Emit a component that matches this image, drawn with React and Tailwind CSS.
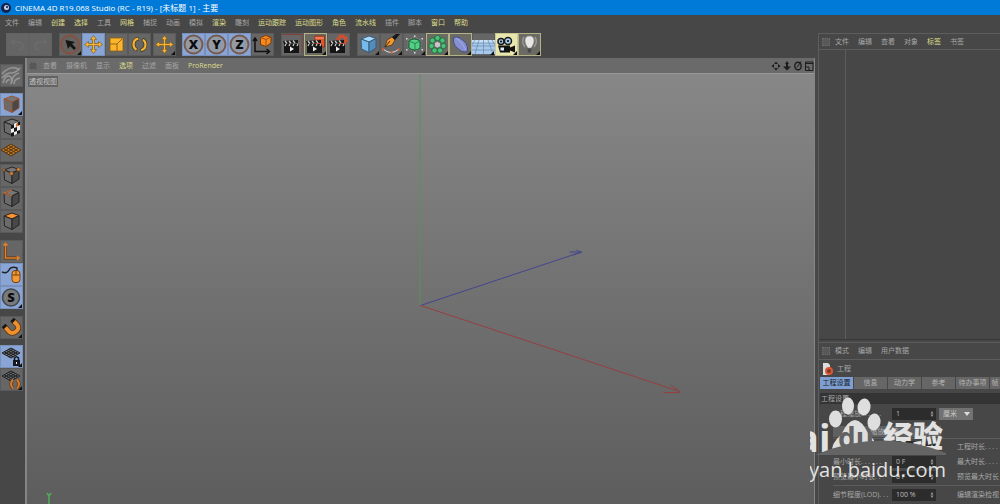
import { useState } from 'react';

const mainMenu = [
  { label: '文件' },
  { label: '编辑' },
  { label: '创建', hot: true },
  { label: '选择', hot: true },
  { label: '工具' },
  { label: '网格', hot: true },
  { label: '捕捉' },
  { label: '动画' },
  { label: '模拟' },
  { label: '渲染', hot: true },
  { label: '雕刻' },
  { label: '运动跟踪', hot: true },
  { label: '运动图形', hot: true },
  { label: '角色', hot: true },
  { label: '流水线', hot: true },
  { label: '插件' },
  { label: '脚本' },
  { label: '窗口', hot: true },
  { label: '帮助', hot: true },
];

const viewMenu = [
  { label: '查看' },
  { label: '摄像机' },
  { label: '显示' },
  { label: '选项', hot: true },
  { label: '过滤' },
  { label: '面板' },
  { label: 'ProRender', hot: true },
];

const objectMenu = [
  { label: '文件' },
  { label: '编辑' },
  { label: '查看' },
  { label: '对象' },
  { label: '标签', hot: true },
  { label: '书签' },
];

const attributeMenu = [{ label: '模式' }, { label: '编辑' }, { label: '用户数据' }];

const tabs = ['工程设置', '信息', '动力学', '参考', '待办事项', '帧'];

const move = 'M11.500 2.500l3 4h-2v4h4v-2l4 3-4 3v-2h-4v4h2l-3 4-3-4h2v-4h-4v2l-4-3 4-3v2h4v-4h-2z';

function Cube({ top = '#777', left = '#6b6b6b', right = '#484848', stroke = '#252525' }) {
  return (
    <g stroke={stroke} strokeWidth="1" strokeLinejoin="round">
      <path d="M4 6l8-3 7 2.500-7 3.500z" fill={top} />
      <path d="M4 6l8 3v10.500L4.500 16z" fill={left} />
      <path d="M12 9l7-3.500V15l-7 4.500z" fill={right} />
    </g>
  );
}

function Axis({ letter }) {
  return (
    <>
      <circle cx="11.5" cy="11.5" r="9" fill="#929aa5" stroke="#775b50" strokeWidth="2" />
      <text x="11.5" y="16" textAnchor="middle" fontSize="13" fontWeight="800" fill="#0c0c10">{letter}</text>
    </>
  );
}

function Clapper() {
  return (
    <g>
      <path d="M3 11h15v9H3z" fill="#151515" />
      <path d="M2 8l15-1v3L3 11z" fill="#171717" />
      <path d="M4 8l2 2.500M8 8l2 2.300M12 7.500l2 2.500M5 11l-1 2M9 11l-1 2M13 11l-1 2M17 11l-1 2" stroke="#c9c9c9" strokeWidth="1.300" />
      <path d="M9 13.500v5l4-2.500z" fill="#eee" />
    </g>
  );
}

function Mesh() {
  return (
    <g stroke="#202020" strokeWidth="1" fill="none">
      <path d="M2 8l9-5 9 5-9 5z" fill="#6d737c" />
      <path d="M4.200 9.200l9-5M6.500 10.500l9-5M8.700 11.800l9-5M4.200 6.800l9 5M6.500 5.500l9 5M8.700 4.200l9 5" />
    </g>
  );
}

const icons = {
  undo: <path d="M6 9h7q4 0 4 4t-4 4M9 6l-4 3 4 3" stroke="#6f6f6f" fill="none" />,
  redo: <path d="M17 9h-7q-4 0-4 4t4 4M14 6l4 3-4 3" stroke="#6f6f6f" fill="none" />,
  select: (
    <>
      <circle cx="11" cy="11.500" r="9" fill="#666260" stroke="#84503f" strokeWidth="2" />
      <path d="M6.500 7l2.500 9 2-3 4 4 2-2-4-4 3-2z" fill="#141414" />
    </>
  ),
  move: <path d={move} fill="#f9b233" stroke="#6c5018" strokeWidth=".6" />,
  scale: (
    <>
      <path d="M5 5h13v13H5z" fill="#fbb52d" stroke="#8a5d13" strokeWidth=".8" />
      <path d="M5 11h7v7M12 11l5-5" stroke="#99630f" fill="none" />
    </>
  ),
  rotate: (
    <>
      <circle cx="11.500" cy="11.500" r="6" fill="none" stroke="#3e3523" strokeWidth="3.600" strokeDasharray="15 3.850" strokeDashoffset="7" />
      <circle cx="11.500" cy="11.500" r="6" fill="none" stroke="#f7b42f" strokeWidth="2.200" strokeDasharray="14 4.850" strokeDashoffset="6.500" />
    </>
  ),
  x: <Axis letter="X" />,
  y: <Axis letter="Y" />,
  z: <Axis letter="Z" />,
  world: (
    <>
      <path d="M4 6v12.500h14M2 8l2-3 2 3M15.500 16l3 2.500-3 2.500" fill="none" stroke="#111" strokeWidth="1.500" />
      <path d="M9.500 4.500l5-2 5.500 1.500v6l-5 3.500-5.500-2z" fill="#f48a21" stroke="#793908" />
      <path d="M9.500 4.500l5.500 2 5-2.500M15 6.500v7" fill="none" stroke="#a54e0b" />
    </>
  ),
  render: (
    <>
      <path d="M1 1.500h20v19" fill="none" stroke="#844034" />
      <Clapper />
    </>
  ),
  renderView: (
    <>
      <path d="M11 3h9.500v11H11z" fill="#e2562e" stroke="#8e321b" />
      <path d="M11 5h9" stroke="#f4a084" />
      <Clapper />
    </>
  ),
  renderSettings: (
    <>
      <circle cx="15" cy="7" r="3.500" fill="none" stroke="#d64e2b" strokeWidth="2.500" />
      <circle cx="15" cy="7" r="5.300" fill="none" stroke="#d64e2b" strokeWidth="1.600" strokeDasharray="2.100 2.060" />
      <Clapper />
    </>
  ),
  cube: <Cube top="#a9d9f8" left="#78b9e9" right="#528dbc" stroke="#365d7c" />,
  pen: (
    <>
      <path d="M3 16q8 7 16 0" stroke="#ddd" fill="none" />
      <path d="M2 15.500h2v2H2zM18 15.500h2v2h-2zM10.500 18.500h2v2h-2z" fill="#d85b32" />
      <path d="M5 14l2-7 5-3 3 3-3 5z" fill="#f4972d" stroke="#402915" strokeWidth=".7" />
      <path d="M12 4l4-3h4l-5 6z" fill="#171717" />
      <path d="M5 14l5-6" stroke="#372310" />
    </>
  ),
  subdivision: (
    <>
      <path d="M5 7l6-3 7 3v8l-7 4-6-4z" fill="none" stroke="#8fa198" strokeDasharray="1.500 1.500" strokeWidth=".7" />
      <path d="M6 8q5-4 11 0v7q-5 4-11 0z" fill="#54cf85" stroke="#175f37" />
      <path d="M6 8l6 2.500L17 8M12 10.500V17" stroke="#238750" fill="none" />
      <path d="M3 5h1.500v1.500H3zM18.500 5H20v1.500h-1.500zM3 16h1.500v1.500H3zM18.500 16H20v1.500h-1.500zM11 2.500h1.500V4H11zM11 19h1.500v1.500H11z" fill="#d5dfda" />
    </>
  ),
  array: (
    <g fill="#4bbf76" stroke="#1b6339" strokeWidth=".8">
      <circle cx="11.500" cy="5" r="2.700" />
      <circle cx="16.500" cy="7.500" r="2.700" />
      <circle cx="17.500" cy="13" r="2.700" />
      <circle cx="14" cy="17.500" r="2.700" />
      <circle cx="8.500" cy="17.500" r="2.700" />
      <circle cx="5.500" cy="13" r="2.700" />
      <circle cx="6.500" cy="7.500" r="2.700" />
      <path d="M8.500 9.500l3-1 3 1.500v3.500l-3 1.500-3-1.500z" fill="#c6c6c6" stroke="#666" />
    </g>
  ),
  deformer: (
    <>
      <path d="M5 4q5-1 10 4t3 11q-5 1-10-4T5 4z" fill="#8690d0" stroke="#464d82" />
      <path d="M7 5q7 5 9.500 12" stroke="#9aa3dd" fill="none" strokeWidth="1.500" />
    </>
  ),
  floor: (
    <>
      <path d="M0 7h23v14H0z" fill="#a7c9ec" />
      <path d="M0 7h23v3H0z" fill="#c8dff4" />
      <path d="M0 10h23M0 13h23M0 17h23M7 7L3 21M11.500 7v14M16 7l5 14M3 7l-3 5M20 7l3 5" stroke="#6587ad" strokeWidth=".7" />
    </>
  ),
  camera: (
    <>
      <circle cx="6" cy="8.500" r="3" fill="#a8cce5" stroke="#17191c" strokeWidth="1.500" />
      <circle cx="13" cy="8" r="3.500" fill="#a8cce5" stroke="#17191c" strokeWidth="1.500" />
      <circle cx="6" cy="8.500" r="1" /><circle cx="13" cy="8" r="1" />
      <path d="M3 12.500h12v2l5-2v7l-5-2v2H5z" fill="#111" />
      <path d="M5.500 14.500h3.500v3H5.500z" fill="#d8edff" />
    </>
  ),
  light: (
    <>
      <path d="M6 4q-3 5 1 10M17 4q3 5-1 10" fill="none" stroke="#989898" strokeWidth="1.500" />
      <path d="M11.500 3q4.500 0 4.500 5 0 3-3 7h-3q-3-4-3-7 0-5 4.500-5z" fill="#e7e7e7" stroke="#999" strokeWidth=".6" />
      <path d="M9.500 15.500h4l-.500 4h-3z" fill="#484848" />
    </>
  ),
  texture: (
    <>
      <path d="M1 2h20v19H1z" fill="#686868" />
      <path d="M2 10q8-9 16-5M2 14q4-5 9-5t9-5M3 19q2-8 6-7t2 8M12 18q0-7 7-9M14 20q0-5 6-6M6 19q1-4 4-3" stroke="#969696" strokeWidth="1.600" fill="none" />
    </>
  ),
  model: <Cube stroke="#9b5632" />,
  checker: (
    <>
      <Cube />
      <path d="M11 9l9-4v11l-9 5z" fill="#eee" />
      <path d="M11 9l3-1v4l-3 1zM17 7l3-2v4l-3 1zM14 12l3-1v4l-3 1zM11 17l3-1v4l-3 1zM17 15l3-1v3l-3 1z" fill="#171717" />
      <path d="M16 8l2-1v3l-2 1z" fill="#d8732c" />
    </>
  ),
  workplane: (
    <g stroke="#523517" strokeWidth="1" fill="none">
      <path d="M1 11l10-6 10 6-10 6z" fill="#c47721" />
      <path d="M3.500 12.500l10-6M6 14l10-6M8.500 15.500l10-6M3.500 9.500l10 6M6 8l10 6M8.500 6.500l10 6" />
    </g>
  ),
  points: (
    <>
      <Cube />
      <path d="M10 8h3v3h-3zM17 4h3v3h-3zM3 5h2v2H3z" fill="#e98b35" stroke="#6b3913" strokeWidth=".6" />
    </>
  ),
  edges: (
    <>
      <Cube />
      <path d="M12 3L4 6l8 3" stroke="#c86c30" strokeWidth="1.300" fill="none" />
    </>
  ),
  polygons: <Cube top="#ff9230" />,
  axis: (
    <>
      <path d="M5.500 3.500V18H19" fill="none" stroke="#593211" strokeWidth="3" />
      <path d="M5.500 3.500V18H19M3.500 5.500l2-2 2 2M17 16l2 2-2 2" fill="none" stroke="#dc8231" strokeWidth="1.600" />
    </>
  ),
  mouse: (
    <>
      <path d="M2 9q5 2 7-2t8-2v3" fill="none" stroke="#202226" strokeWidth="1.400" />
      <rect x="12" y="7.500" width="8" height="12" rx="3" fill="#f49a34" stroke="#714010" />
      <path d="M12 12h8M16 7.500V12" stroke="#71410f" />
    </>
  ),
  snap: (
    <>
      <circle cx="11" cy="11.500" r="8.500" fill="#777b80" stroke="#44474b" strokeWidth="1.600" />
      <text x="11" y="16" textAnchor="middle" fontSize="13" fontWeight="800" fill="#0d0d0d">S</text>
    </>
  ),
  magnet: (
    <>
      <path d="M5 11l4 4.500q3 3 7 0t1-7L13.500 5" fill="none" stroke="#5a3512" strokeWidth="5.500" />
      <path d="M5 11l4 4.500q3 3 7 0t1-7L13.500 5" fill="none" stroke="#ef902d" strokeWidth="4" />
      <path d="M3.500 9.500L5.500 11.500M12 3.500l2 2" stroke="#171717" strokeWidth="5" />
    </>
  ),
  lockMesh: (
    <>
      <Mesh />
      <path d="M14.500 15v-2q2-2.500 4 0v2" fill="none" stroke="#15191f" strokeWidth="1.600" />
      <path d="M13 15h7v6h-7z" fill="#15191f" />
      <path d="M16 17h1v2h-1z" fill="#eee" />
    </>
  ),
  rotateMesh: (
    <>
      <Mesh />
      <path d="M13 11.500q-4 4.500 0 9M17 11.500q4 4.500 0 9" fill="none" stroke="#593211" strokeWidth="3.200" />
      <path d="M13 11.500q-4 4.500 0 9M17 11.500q4 4.500 0 9" fill="none" stroke="#d97b2a" strokeWidth="2" />
    </>
  ),
};

const toolbar = [
  { gap: 'mr-[7px]', items: [{ icon: 'undo', label: '撤销', off: true }, { icon: 'redo', label: '重做', off: true }] },
  {
    gap: 'mr-[2px]',
    items: [
      { icon: 'select', label: '实时选择', corner: true },
      { icon: 'move', label: '移动', on: true },
      { icon: 'scale', label: '缩放' },
      { icon: 'rotate', label: '旋转' },
    ],
  },
  { gap: 'mr-[6px]', items: [{ icon: 'move', label: '最近工具', corner: true }] },
  {
    gap: 'mr-[7px]',
    items: [
      { icon: 'x', label: 'X 轴', on: true },
      { icon: 'y', label: 'Y 轴', on: true },
      { icon: 'z', label: 'Z 轴', on: true },
      { icon: 'world', label: '坐标系统' },
    ],
  },
  {
    gap: 'mr-[7px]',
    items: [
      { icon: 'render', label: '渲染活动视图' },
      { icon: 'renderView', label: '渲染到图片查看器', framed: true, corner: true },
      { icon: 'renderSettings', label: '编辑渲染设置' },
    ],
  },
  {
    gap: '',
    items: [
      { icon: 'cube', label: '立方体', corner: true },
      { icon: 'pen', label: '画笔', corner: true },
      { icon: 'subdivision', label: '细分曲面', corner: true },
      { icon: 'array', label: '阵列', framed: true, corner: true },
      { icon: 'deformer', label: '扭曲', framed: true, corner: true },
      { icon: 'floor', label: '地面', corner: true },
      { icon: 'camera', label: '摄像机', lit: true, corner: true },
      { icon: 'light', label: '灯光', framed: true, corner: true },
    ],
  },
];

const modes = [
  { gap: 'mb-[6px]', items: [{ icon: 'texture', label: '转为可编辑对象' }] },
  {
    gap: 'mb-[2px]',
    items: [
      { icon: 'model', label: '模型', on: true, corner: true },
      { icon: 'checker', label: '纹理' },
      { icon: 'workplane', label: '工作平面' },
    ],
  },
  {
    gap: 'mb-[7px]',
    items: [
      { icon: 'points', label: '点' },
      { icon: 'edges', label: '边' },
      { icon: 'polygons', label: '多边形' },
    ],
  },
  {
    gap: 'mb-[7px]',
    items: [
      { icon: 'axis', label: '启用轴心' },
      { icon: 'mouse', label: '微调', on: true },
      { icon: 'snap', label: '视窗独显', on: true, corner: true },
    ],
  },
  { gap: 'mb-[6px]', items: [{ icon: 'magnet', label: '启用捕捉', corner: true }] },
  {
    gap: '',
    items: [
      { icon: 'lockMesh', label: '锁定工作平面', on: true, corner: true },
      { icon: 'rotateMesh', label: '平面工作平面', corner: true },
    ],
  },
];

function ToolButton({ item }) {
  let look = 'bg-[#666] ring-[#5a5a5a]';
  if (item.off) look = 'bg-[#656565] ring-[#626262]';
  if (item.on) look = 'bg-[#88a5d6] ring-[#7890ba]';
  if (item.framed) look = 'bg-[#6b6b64] ring-[#b4b287]';
  if (item.lit) look = 'bg-[#e9e7ae] ring-[#c9c795]';
  return (
    <button aria-label={item.label} className={`block w-[23px] h-[23px] ring-1 ring-inset ${look}`}>
      <svg viewBox="0 0 23 23" className="w-full h-full">
        {icons[item.icon]}
        {item.corner && <path d="M22 18v4h-4z" fill="#111" />}
      </svg>
    </button>
  );
}

function Menu({ items }) {
  return (
    <nav className="flex items-center gap-[9px] whitespace-nowrap">
      {items.map((item) => (
        <button key={item.label} className={item.hot ? 'text-[#dddc8c]' : 'text-[#a6a6a6]'}>
          {item.label}
        </button>
      ))}
    </nav>
  );
}

function Grip() {
  return <span className="w-[8px] h-[8px] border border-dotted border-[#6c6c6c] bg-[#585858] shrink-0" />;
}

function Field({ id, label, value }) {
  return (
    <>
      <label htmlFor={id} className="w-[59px] shrink-0 overflow-hidden">{label}</label>
      <span className="flex items-center w-[44px] h-[12px] bg-[#2c2c2c] shrink-0">
        <input id={id} defaultValue={value} className="w-[38px] pl-1 bg-transparent text-[#bdbdbd] outline-none" />
        <svg viewBox="0 0 4 8" className="w-1 h-2">
          <path d="M0.500 3.500l1.500-2.500 1.500 2.500zM0.500 4.500l1.500 2.500 1.500-2.500z" fill="#999" />
        </svg>
      </span>
    </>
  );
}

function Viewport() {
  return (
    <main className="flex-1 min-w-0 flex flex-col border-l-2 border-r border-[#858585]">
      <div className="h-[16px] shrink-0 flex items-center bg-[#6a6a6a] border-b border-[#999] pl-[2px]">
        <Grip />
        <div className="ml-[6px] flex-1"><Menu items={viewMenu} /></div>
        <div className="flex gap-px">
          <button aria-label="平移视图">
            <svg viewBox="0 0 10 10" className="w-[10px] h-[10px]">
              <path d="M5 0.500l2 2.500H3zM5 9.500L3 7h4zM0.500 5L3 3v4zM9.500 5L7 3v4z" fill="#1d1d1d" />
            </svg>
          </button>
          <button aria-label="缩放视图">
            <svg viewBox="0 0 10 10" className="w-[10px] h-[10px]">
              <path d="M5 0l2 3H6v2.500h3l-4 4-4-4h3V3H3z" fill="#1d1d1d" />
            </svg>
          </button>
          <button aria-label="旋转视图">
            <svg viewBox="0 0 10 10" className="w-[10px] h-[10px]">
              <ellipse cx="5" cy="5" rx="3.200" ry="3.800" fill="none" stroke="#1d1d1d" strokeWidth="1.400" />
              <path d="M4 6.500l4-6" stroke="#1d1d1d" />
            </svg>
          </button>
          <button aria-label="切换视图">
            <svg viewBox="0 0 10 10" className="w-[10px] h-[10px]">
              <path d="M1.500 1h7.500v8.500H1.500zM1.500 2.500H9M1.500 6H5v3.500" fill="none" stroke="#1d1d1d" />
            </svg>
          </button>
        </div>
      </div>
      <div className="relative flex-1 overflow-hidden bg-linear-to-b from-[#878787] to-[#5d5d5d]">
        <span className="absolute left-px top-[2px] px-px leading-[11px] bg-[#626262] text-[#c4c4c4]">透视视图</span>
        <svg viewBox="0 0 788 430" preserveAspectRatio="xMidYMid slice" className="w-full h-full" fill="none">
          <path d="M393.500 0v231" stroke="#54925a" />
          <path d="M394 231.500L555 178M543 178h12M555 178l-8 3M550 176l5 3" stroke="#45458f" />
          <path d="M394 231.500L653 317.500M637 318.500h16M644 311l9 6.500" stroke="#963f3f" />
          <path d="M20.500 419l2 3 2-3M22.500 422v8" stroke="#54aa5b" strokeWidth="1.500" />
        </svg>
      </div>
    </main>
  );
}

function Watermark() {
  return (
    <div className="absolute right-[54px] bottom-[16px] w-[136px] h-[92px] overflow-hidden pointer-events-none text-[#e2e2e2]">
      <svg viewBox="0 0 136 92" className="absolute inset-0 w-full h-full">
        <g fill="#dedede">
          <ellipse cx="38" cy="10" rx="6" ry="8.500" />
          <ellipse cx="54" cy="11" rx="6.500" ry="8.500" transform="rotate(8 54 11)" />
          <ellipse cx="25.500" cy="23" rx="6.500" ry="8.500" />
          <ellipse cx="64" cy="26" rx="6.500" ry="8.500" transform="rotate(8 64 26)" />
          <path d="M22 57q-1-10 9-18 7-15 14-15t14 15q9 7 8 18z" />
        </g>
      </svg>
      <span className="absolute -left-[14px] top-[23px] text-[38px] leading-[36px] font-bold">ai</span>
      <span className="absolute left-[28px] top-[23px] text-[28px] leading-[36px] font-bold text-[#626262]">du</span>
      <span className="absolute left-[73px] top-[22px] text-[30px] leading-[36px] font-black">经验</span>
      <svg viewBox="0 0 136 92" className="absolute inset-0 w-full h-full">
        <path d="M5 59Q70 31 136 57v2z" fill="#646464" />
      </svg>
      <span className="absolute -left-px top-[60px] text-[20px] leading-[28px]">yan.baidu.com</span>
    </div>
  );
}

function ObjectManager() {
  return (
    <section className="flex-1 flex flex-col border-t border-l border-[#5d5d5d]">
      <div className="h-[16px] shrink-0 flex items-center gap-[5px] pl-[3px] border-b border-[#5d5d5d]">
        <Grip />
        <Menu items={objectMenu} />
      </div>
      <div className="flex-1 flex">
        <div className="w-[27px] border-r border-[#5d5d5d]" />
        <div className="flex-1" />
      </div>
      <div className="h-[3px] bg-[#474747] border-t border-[#383838]" />
    </section>
  );
}

function Attributes() {
  const [tab, setTab] = useState(tabs[0]);

  return (
    <section className="h-[162px] shrink-0 flex flex-col border-l border-[#5d5d5d] text-[#a8a8a8] overflow-hidden">
      <div className="h-[18px] shrink-0 flex items-center gap-[5px] pl-[3px] border-t border-b border-[#5d5d5d]">
        <Grip />
        <Menu items={attributeMenu} />
      </div>
      <div className="h-[17px] shrink-0 flex items-center gap-[4px] pl-[3px]">
        <svg viewBox="0 0 11 12" className="w-[11px] h-[12px]">
          <path d="M1 0h5l2 2v10H1z" fill="#ddd" />
          <circle cx="7" cy="8" r="3" fill="#7c3a2a" stroke="#dc5733" strokeWidth="2" />
        </svg>
        工程
      </div>
      <div className="shrink-0 flex gap-px pl-px whitespace-nowrap">
        {tabs.map((name) => (
          <button
            key={name}
            onClick={() => setTab(name)}
            className={`h-[12px] leading-[12px] basis-[33px] last:basis-[9px] last:grow shrink-0 ${tab === name ? 'bg-[#7f9fd3] text-[#151b26]' : 'bg-[#666] text-[#b4b4b4]'}`}
          >
            {name}
          </button>
        ))}
      </div>
      <h2 className="shrink-0 mt-1 ml-px h-[11px] leading-[11px] pl-px bg-[#343434]">{tab}</h2>
      <div className="pl-[14px] whitespace-nowrap">
        <div className="h-[20px] flex items-center">
          <Field id="scale" label="工程缩放. . . . . ." value="1" />
          <span className="ml-[3px] w-[34px] h-[12px] flex items-center bg-[#727272] text-[#c8c8c8]">
            <select aria-label="单位" className="w-[25px] h-[12px] pl-1 appearance-none bg-transparent">
              <option>厘米</option>
            </select>
            <svg viewBox="0 0 6 4" className="w-[6px] h-1"><path d="M0 0h6L3 4z" fill="#ddd" /></svg>
          </span>
        </div>
        <div className="h-[14px] flex items-center">
          <button className="w-[108px] h-[11px] bg-[#606060] leading-[11px]">缩放工程...</button>
        </div>
        <div className="h-[16px] flex items-center border-t border-[#5d5d5d]">
          <Field id="fps" label="帧率. . . . . . . ." value="30" />
          <span className="ml-[21px]">工程时长. . . .</span>
        </div>
        <div className="h-[15px] flex items-center">
          <Field id="min" label="最小时长. . . . . ." value="0 F" />
          <span className="ml-[21px]">最大时长. . . .</span>
        </div>
        <div className="h-[15px] flex items-center">
          <Field id="preview" label="预览最小时长. ." value="0 F" />
          <span className="ml-[21px]">预览最大时长</span>
        </div>
        <div className="mt-px h-[19px] flex items-center border-t border-[#5d5d5d]">
          <Field id="lod" label="细节程度(LOD). . ." value="100 %" />
          <span className="ml-[21px]">编辑渲染检视</span>
        </div>
      </div>
    </section>
  );
}

export default function App() {
  return (
    <div className="relative min-h-screen flex flex-col overflow-hidden bg-[#474747] font-['Open_Sans','Noto_Sans_CJK_SC',sans-serif] text-[7px] leading-[10px]">
      <header className="h-[15px] shrink-0 flex items-center gap-[4px] pl-[1px] bg-[#007ad8] text-white">
        <svg viewBox="0 0 10 10" className="w-[10px] h-[10px]">
          <circle cx="5" cy="5" r="5" fill="#17224b" />
          <circle cx="5.500" cy="4.500" r="2.500" fill="#c8d4ee" />
          <circle cx="6" cy="4" r="1.200" fill="#324270" />
        </svg>
        <h1 className="text-[8px] leading-[14px]">CINEMA 4D R19.068 Studio (RC - R19) - [未标题 1] - 主要</h1>
      </header>
      <div className="h-[15px] shrink-0 flex items-center pl-[5px]">
        <Menu items={mainMenu} />
      </div>
      <div className="flex-1 flex">
        <div className="flex-1 min-w-0 flex flex-col">
          <div className="h-[28px] shrink-0 flex pt-[3px] pl-[6px]">
            {toolbar.map((group) => (
              <div key={group.items[0].label} className={`flex ${group.gap}`}>
                {group.items.map((item) => <ToolButton key={item.label} item={item} />)}
              </div>
            ))}
          </div>
          <div className="flex-1 flex">
            <aside className="w-[25px] shrink-0 flex flex-col pt-[6px]">
              {modes.map((group) => (
                <div key={group.items[0].label} className={group.gap}>
                  {group.items.map((item) => <ToolButton key={item.label} item={item} />)}
                </div>
              ))}
            </aside>
            <Viewport />
          </div>
        </div>
        <div className="w-[185px] shrink-0 flex flex-col pl-[3px] pt-[3px]">
          <ObjectManager />
          <Attributes />
        </div>
      </div>
      <Watermark />
    </div>
  );
}
